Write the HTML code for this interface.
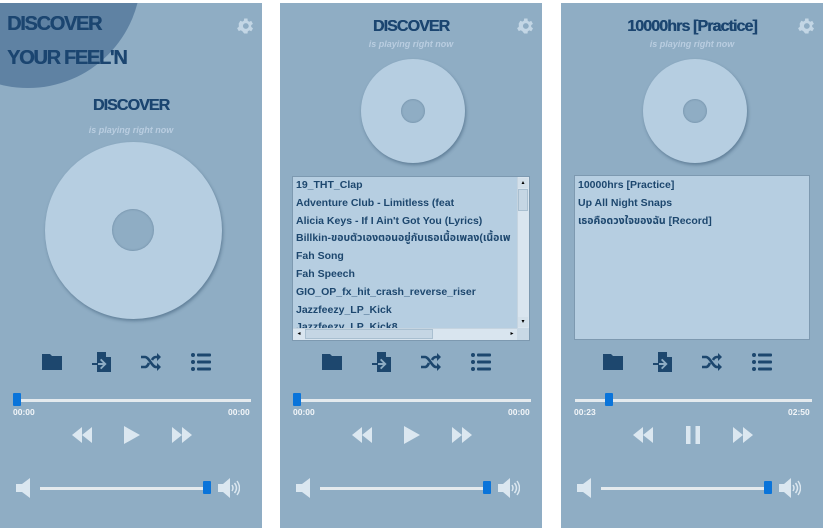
<!DOCTYPE html>
<html><head><meta charset="utf-8"><style>
*{margin:0;padding:0;box-sizing:border-box}
body{width:825px;height:531px;background:#fff;position:relative;overflow:hidden;font-family:"Liberation Sans","Noto Sans CJK SC",sans-serif}
.p{position:absolute;top:3px;width:262px;height:525px;background:#8fadc4;overflow:hidden}
.a{position:absolute}
.t{position:absolute;left:0;width:262px;text-align:center;color:#1b4570;font-weight:bold;font-size:16px;letter-spacing:-0.9px;text-shadow:0.4px 0 #1b4570}
.s{position:absolute;left:0;width:262px;text-align:center;color:#b9cde0;font-style:italic;font-weight:bold;font-size:9px}
.disc{position:absolute;border-radius:50%;background:#b6cee1;box-shadow:1px 2px 3px rgba(40,70,100,.45)}
.hole{position:absolute;border-radius:50%;background:#8fadc4;box-shadow:inset 0 0 2px rgba(40,70,100,.4)}
.bar{position:absolute;height:3px;background:#e4eaee}
.thumb{position:absolute;width:8px;height:13px;background:#0a74da;border-radius:1px}
.tm{position:absolute;top:404px;font-size:8.5px;font-weight:bold;color:#f2f5f8}
.list{position:absolute;background:#b6cee1;border:1px solid #7d99b0;overflow:hidden}
.list div.r{font-size:10.5px;font-weight:bold;color:#1d476e;height:17.8px;line-height:17.8px;padding-left:3px;white-space:nowrap;font-family:"Liberation Sans","Noto Sans Thai","DejaVu Sans",sans-serif}
.gear{position:absolute;top:13px;left:235px}
.ic{position:absolute;top:349px}
</style></head><body>

<!-- PANEL 1 -->
<div class="p" style="left:0">
 <div class="a" style="left:-85px;top:-141px;width:226px;height:226px;border-radius:50%;background:#5f82a3"></div>
 <div class="a" style="left:7px;top:4px;font-size:20px;font-weight:bold;color:#1b4570;letter-spacing:-1.3px;line-height:34px;text-shadow:0.4px 0 #1b4570">DISCOVER<br>YOUR FEEL'N</div>
 <svg class="gear" width="20" height="20" viewBox="0 0 24 24"><path fill="#c3d6e5" d="M19.4 13a7.5 7.5 0 000-2l2.1-1.6-2-3.5-2.5 1a7.4 7.4 0 00-1.7-1L15 3h-4l-.4 2.7a7.4 7.4 0 00-1.7 1l-2.5-1-2 3.5L4.6 11a7.5 7.5 0 000 2l-2.1 1.6 2 3.5 2.5-1a7.4 7.4 0 001.7 1L11 21h4l.4-2.7a7.4 7.4 0 001.7-1l2.5 1 2-3.5zM13 15.5A3.5 3.5 0 1113 8.5a3.5 3.5 0 010 7z"/></svg>
 <div class="t" style="top:94px">DISCOVER</div>
 <div class="s" style="top:122px">is playing right now</div>
 <div class="disc" style="left:45px;top:139px;width:177px;height:177px"></div>
 <div class="hole" style="left:112px;top:206px;width:42px;height:42px"></div>

 <svg class="ic" style="left:42px" width="20" height="20" viewBox="0 0 20 20"><path fill="#1d476e" d="M0 2h8l2 2h10v14H0z"/></svg>
 <svg class="ic" style="left:92px" width="20" height="20" viewBox="0 0 20 20"><path fill="#1d476e" d="M5 0h9l5 5v15H5v-7h6l-3 3 1.3 1.3L14.6 12 9.3 6.7 8 8l3 3H5zM14 0v5h5z"/><path stroke="#1d476e" stroke-width="2" d="M0 12h6"/></svg>
 <svg class="ic" style="left:141px" width="20" height="20" viewBox="0 0 20 20"><path fill="none" stroke="#1d476e" stroke-width="2.6" d="M0 5h4c4 0 7 10 11 10h2M0 15h4c2 0 3-2 4-4M11 8c1-2 2-3 4-3h2"/><path fill="#1d476e" d="M16 1l4 4-4 4zM16 11l4 4-4 4z"/></svg>
 <svg class="ic" style="left:191px" width="20" height="20" viewBox="0 0 20 20"><g fill="#1d476e"><circle cx="2" cy="3" r="2"/><circle cx="2" cy="10" r="2"/><circle cx="2" cy="17" r="2"/><rect x="6" y="1.5" width="14" height="3" rx="1"/><rect x="6" y="8.5" width="14" height="3" rx="1"/><rect x="6" y="15.5" width="14" height="3" rx="1"/></g></svg>

 <div class="bar" style="left:14px;top:396px;width:237px"></div>
 <div class="thumb" style="left:13px;top:390px"></div>
 <div class="tm" style="left:13px">00:00</div>
 <div class="tm" style="left:228px">00:00</div>

 <svg class="a" style="left:72px;top:424px" width="20" height="16" viewBox="0 0 20 16"><path fill="#dbe7f0" d="M10 0v16L0 8zM20 0v16L10 8z"/></svg>
 <svg class="a" style="left:124px;top:423px" width="16" height="18" viewBox="0 0 16 18"><path fill="#dbe7f0" d="M0 0l16 9-16 9z"/></svg>
 <svg class="a" style="left:172px;top:424px" width="20" height="16" viewBox="0 0 20 16"><path fill="#dbe7f0" d="M0 0v16l10-8zM10 0v16l10-8z"/></svg>

 <svg class="a" style="left:16px;top:475px" width="16" height="20" viewBox="0 0 16 20"><path fill="#dbe7f0" d="M0 6h6l8-6v20l-8-6H0z"/></svg>
 <div class="bar" style="left:40px;top:484px;width:168px"></div>
 <div class="thumb" style="left:203px;top:478px"></div>
 <svg class="a" style="left:218px;top:475px" width="22" height="20" viewBox="0 0 22 20"><path fill="#dbe7f0" d="M0 6h5l7-6v20l-7-6H0z"/><path fill="none" stroke="#dbe7f0" stroke-width="1.5" d="M14 7q2 3 0 6M16.5 5q4 5 0 10M19 3q5 7 0 14"/></svg>
</div>

<!-- PANEL 2 -->
<div class="p" style="left:280px">
 <svg class="gear" width="20" height="20" viewBox="0 0 24 24"><path fill="#c3d6e5" d="M19.4 13a7.5 7.5 0 000-2l2.1-1.6-2-3.5-2.5 1a7.4 7.4 0 00-1.7-1L15 3h-4l-.4 2.7a7.4 7.4 0 00-1.7 1l-2.5-1-2 3.5L4.6 11a7.5 7.5 0 000 2l-2.1 1.6 2 3.5 2.5-1a7.4 7.4 0 001.7 1L11 21h4l.4-2.7a7.4 7.4 0 001.7-1l2.5 1 2-3.5zM13 15.5A3.5 3.5 0 1113 8.5a3.5 3.5 0 010 7z"/></svg>
 <div class="t" style="top:15px">DISCOVER</div>
 <div class="s" style="top:36px">is playing right now</div>
 <div class="disc" style="left:81px;top:56px;width:104px;height:104px"></div>
 <div class="hole" style="left:121px;top:96px;width:24px;height:24px"></div>
 <div class="list" style="left:12px;top:173px;width:238px;height:165px">
  <div class="r">19_THT_Clap</div><div class="r">Adventure Club - Limitless (feat</div><div class="r">Alicia Keys - If I Ain't Got You (Lyrics)</div><div class="r">Billkin-ขอบตัวเองตอนอยู่กับเธอเนื้อเพลง(เนื้อเพ</div><div class="r">Fah Song</div><div class="r">Fah Speech</div><div class="r">GIO_OP_fx_hit_crash_reverse_riser</div><div class="r">Jazzfeezy_LP_Kick</div><div class="r">Jazzfeezy_LP_Kick8</div>
  <div class="a" style="right:0;top:0;width:12px;height:152px;background:#d9e5ef;border-left:1px solid #c5d4e0"></div>
  <div class="a" style="right:1px;top:1px;width:10px;height:10px;background:#d3e0ea;font-size:6px;line-height:10px;text-align:center">▴</div>
  <div class="a" style="right:1px;top:12px;width:10px;height:22px;background:#c5d6e4;border:1px solid #a9bfd0"></div>
  <div class="a" style="right:1px;top:140px;width:10px;height:10px;background:#d3e0ea;font-size:6px;line-height:10px;text-align:center">▾</div>
  <div class="a" style="left:0;bottom:0;width:225px;height:12px;background:#d9e5ef;border-top:1px solid #c5d4e0"></div>
  <div class="a" style="left:1px;bottom:1px;width:10px;height:10px;font-size:6px;line-height:10px;text-align:center">◂</div>
  <div class="a" style="left:12px;bottom:1px;width:128px;height:10px;background:#c5d6e4;border:1px solid #a9bfd0"></div>
  <div class="a" style="left:214px;bottom:1px;width:10px;height:10px;font-size:6px;line-height:10px;text-align:center">▸</div>
  <div class="a" style="right:0;bottom:0;width:12px;height:12px;background:#c8d8e5"></div>
 </div>

 <svg class="ic" style="left:42px" width="20" height="20" viewBox="0 0 20 20"><path fill="#1d476e" d="M0 2h8l2 2h10v14H0z"/></svg>
 <svg class="ic" style="left:92px" width="20" height="20" viewBox="0 0 20 20"><path fill="#1d476e" d="M5 0h9l5 5v15H5v-7h6l-3 3 1.3 1.3L14.6 12 9.3 6.7 8 8l3 3H5zM14 0v5h5z"/><path stroke="#1d476e" stroke-width="2" d="M0 12h6"/></svg>
 <svg class="ic" style="left:141px" width="20" height="20" viewBox="0 0 20 20"><path fill="none" stroke="#1d476e" stroke-width="2.6" d="M0 5h4c4 0 7 10 11 10h2M0 15h4c2 0 3-2 4-4M11 8c1-2 2-3 4-3h2"/><path fill="#1d476e" d="M16 1l4 4-4 4zM16 11l4 4-4 4z"/></svg>
 <svg class="ic" style="left:191px" width="20" height="20" viewBox="0 0 20 20"><g fill="#1d476e"><circle cx="2" cy="3" r="2"/><circle cx="2" cy="10" r="2"/><circle cx="2" cy="17" r="2"/><rect x="6" y="1.5" width="14" height="3" rx="1"/><rect x="6" y="8.5" width="14" height="3" rx="1"/><rect x="6" y="15.5" width="14" height="3" rx="1"/></g></svg>

 <div class="bar" style="left:14px;top:396px;width:237px"></div>
 <div class="thumb" style="left:13px;top:390px"></div>
 <div class="tm" style="left:13px">00:00</div>
 <div class="tm" style="left:228px">00:00</div>

 <svg class="a" style="left:72px;top:424px" width="20" height="16" viewBox="0 0 20 16"><path fill="#dbe7f0" d="M10 0v16L0 8zM20 0v16L10 8z"/></svg>
 <svg class="a" style="left:124px;top:423px" width="16" height="18" viewBox="0 0 16 18"><path fill="#dbe7f0" d="M0 0l16 9-16 9z"/></svg>
 <svg class="a" style="left:172px;top:424px" width="20" height="16" viewBox="0 0 20 16"><path fill="#dbe7f0" d="M0 0v16l10-8zM10 0v16l10-8z"/></svg>

 <svg class="a" style="left:16px;top:475px" width="16" height="20" viewBox="0 0 16 20"><path fill="#dbe7f0" d="M0 6h6l8-6v20l-8-6H0z"/></svg>
 <div class="bar" style="left:40px;top:484px;width:168px"></div>
 <div class="thumb" style="left:203px;top:478px"></div>
 <svg class="a" style="left:218px;top:475px" width="22" height="20" viewBox="0 0 22 20"><path fill="#dbe7f0" d="M0 6h5l7-6v20l-7-6H0z"/><path fill="none" stroke="#dbe7f0" stroke-width="1.5" d="M14 7q2 3 0 6M16.5 5q4 5 0 10M19 3q5 7 0 14"/></svg>
</div>

<!-- PANEL 3 -->
<div class="p" style="left:561px">
 <svg class="gear" width="20" height="20" viewBox="0 0 24 24"><path fill="#c3d6e5" d="M19.4 13a7.5 7.5 0 000-2l2.1-1.6-2-3.5-2.5 1a7.4 7.4 0 00-1.7-1L15 3h-4l-.4 2.7a7.4 7.4 0 00-1.7 1l-2.5-1-2 3.5L4.6 11a7.5 7.5 0 000 2l-2.1 1.6 2 3.5 2.5-1a7.4 7.4 0 001.7 1L11 21h4l.4-2.7a7.4 7.4 0 001.7-1l2.5 1 2-3.5zM13 15.5A3.5 3.5 0 1113 8.5a3.5 3.5 0 010 7z"/></svg>
 <div class="t" style="top:15px">10000hrs [Practice]</div>
 <div class="s" style="top:36px">is playing right now</div>
 <div class="disc" style="left:82px;top:56px;width:104px;height:104px"></div>
 <div class="hole" style="left:122px;top:96px;width:24px;height:24px"></div>
 <div class="list" style="left:13px;top:172px;width:236px;height:165px;padding-top:1px">
  <div class="r">10000hrs [Practice]</div><div class="r">Up All Night Snaps</div><div class="r">เธอคือดวงใจของฉัน [Record]</div>
 </div>

 <svg class="ic" style="left:42px" width="20" height="20" viewBox="0 0 20 20"><path fill="#1d476e" d="M0 2h8l2 2h10v14H0z"/></svg>
 <svg class="ic" style="left:92px" width="20" height="20" viewBox="0 0 20 20"><path fill="#1d476e" d="M5 0h9l5 5v15H5v-7h6l-3 3 1.3 1.3L14.6 12 9.3 6.7 8 8l3 3H5zM14 0v5h5z"/><path stroke="#1d476e" stroke-width="2" d="M0 12h6"/></svg>
 <svg class="ic" style="left:141px" width="20" height="20" viewBox="0 0 20 20"><path fill="none" stroke="#1d476e" stroke-width="2.6" d="M0 5h4c4 0 7 10 11 10h2M0 15h4c2 0 3-2 4-4M11 8c1-2 2-3 4-3h2"/><path fill="#1d476e" d="M16 1l4 4-4 4zM16 11l4 4-4 4z"/></svg>
 <svg class="ic" style="left:191px" width="20" height="20" viewBox="0 0 20 20"><g fill="#1d476e"><circle cx="2" cy="3" r="2"/><circle cx="2" cy="10" r="2"/><circle cx="2" cy="17" r="2"/><rect x="6" y="1.5" width="14" height="3" rx="1"/><rect x="6" y="8.5" width="14" height="3" rx="1"/><rect x="6" y="15.5" width="14" height="3" rx="1"/></g></svg>

 <div class="bar" style="left:14px;top:396px;width:237px"></div>
 <div class="thumb" style="left:44px;top:390px"></div>
 <div class="tm" style="left:13px">00:23</div>
 <div class="tm" style="left:227px">02:50</div>

 <svg class="a" style="left:72px;top:424px" width="20" height="16" viewBox="0 0 20 16"><path fill="#dbe7f0" d="M10 0v16L0 8zM20 0v16L10 8z"/></svg>
 <svg class="a" style="left:125px;top:423px" width="14" height="18" viewBox="0 0 14 18"><path fill="#dbe7f0" d="M0 0h4.5v18H0zM9.5 0H14v18H9.5z"/></svg>
 <svg class="a" style="left:172px;top:424px" width="20" height="16" viewBox="0 0 20 16"><path fill="#dbe7f0" d="M0 0v16l10-8zM10 0v16l10-8z"/></svg>

 <svg class="a" style="left:16px;top:475px" width="16" height="20" viewBox="0 0 16 20"><path fill="#dbe7f0" d="M0 6h6l8-6v20l-8-6H0z"/></svg>
 <div class="bar" style="left:40px;top:484px;width:168px"></div>
 <div class="thumb" style="left:203px;top:478px"></div>
 <svg class="a" style="left:218px;top:475px" width="22" height="20" viewBox="0 0 22 20"><path fill="#dbe7f0" d="M0 6h5l7-6v20l-7-6H0z"/><path fill="none" stroke="#dbe7f0" stroke-width="1.5" d="M14 7q2 3 0 6M16.5 5q4 5 0 10M19 3q5 7 0 14"/></svg>
</div>
</body></html>
